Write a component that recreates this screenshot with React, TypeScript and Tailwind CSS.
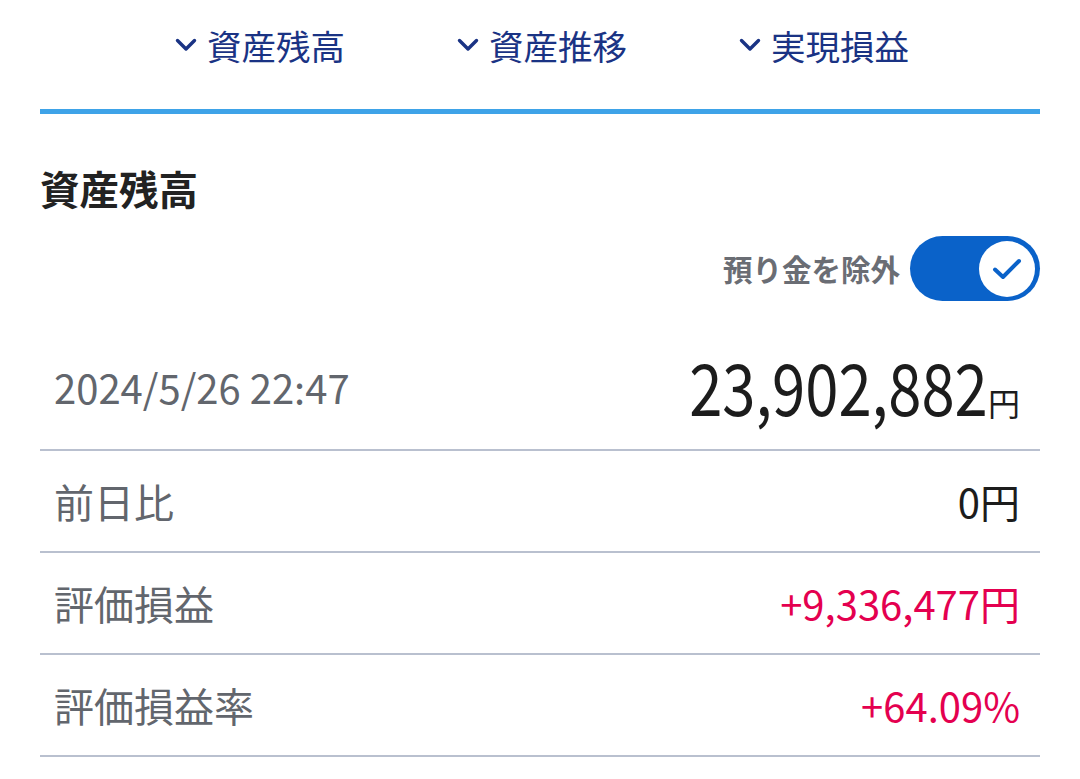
const tabs = ['資産残高', '資産推移', '実現損益']

const rows = [
    { label: '前日比', value: '0円', red: false },
    { label: '評価損益', value: '+9,336,477円', red: true },
    { label: '評価損益率', value: '+64.09%', red: true },
]

export default function App() {
    return (
        <div className="w-[1080px] h-[779px] bg-white overflow-hidden font-['Noto_Sans_CJK_JP','Noto_Sans',sans-serif]">
            {/* tabs */}
            <nav className="h-[109px] flex justify-center gap-[112px] pt-[26px] pl-[4px]">
                {tabs.map((t) => (
                    <div key={t} className="flex items-center gap-[10px] h-[38px] text-[#1a3384]">
                        <svg width="22" height="14" viewBox="0 0 22 14" fill="none">
                            <path d="M2.5 2.5L11 11l8.5-8.5" stroke="currentColor" strokeWidth="3.4" strokeLinecap="round" strokeLinejoin="round" />
                        </svg>
                        <span className="text-[34.5px] leading-none">{t}</span>
                    </div>
                ))}
            </nav>
            <div className="mx-[40px] h-[5px] bg-[#3ea3e8]" />

            <section className="px-[40px]">
                <h2 className="mt-[52px] text-[39.5px] leading-[44px] font-bold text-[#222]">資産残高</h2>

                <div className="mt-[26px] flex justify-end items-center gap-[10px]">
                    <span className="text-[29.5px] font-bold text-[#6a6d74]">預り金を除外</span>
                    <button className="w-[130px] h-[65px] rounded-full bg-[#0a62c9] flex items-center justify-end pr-[5px]">
                        <span className="w-[56px] h-[56px] rounded-full bg-white flex items-center justify-center">
                            <svg width="30" height="24" viewBox="0 0 30 24" fill="none">
                                <path d="M3 12.5l8 7.5L27 4" stroke="#0a62c9" strokeWidth="4" strokeLinecap="round" strokeLinejoin="round" />
                            </svg>
                        </span>
                    </button>
                </div>

                <div className="h-[150px] pt-[24px] flex items-center justify-between border-b-2 border-[#b9c0cf]">
                    <span className="pl-[14px] text-[40px] text-[#62666d]">2024/5/26 22:47</span>
                    <span className="pr-[20px] flex items-baseline text-[#1c1c1c]">
                        <span className="text-[72px] leading-none inline-block scale-x-[0.83] origin-right">23,902,882</span>
                        <span className="text-[32px]">円</span>
                    </span>
                </div>

                {rows.map((r) => (
                    <div key={r.label} className="h-[102px] flex items-center justify-between border-b-2 border-[#b9c0cf]">
                        <span className="pl-[14px] text-[40px] text-[#62666d]">{r.label}</span>
                        <span className={`pr-[20px] text-[40px] ${r.red ? 'text-[#e4004f]' : 'text-[#1c1c1c]'}`}>{r.value}</span>
                    </div>
                ))}
            </section>
        </div>
    )
}
